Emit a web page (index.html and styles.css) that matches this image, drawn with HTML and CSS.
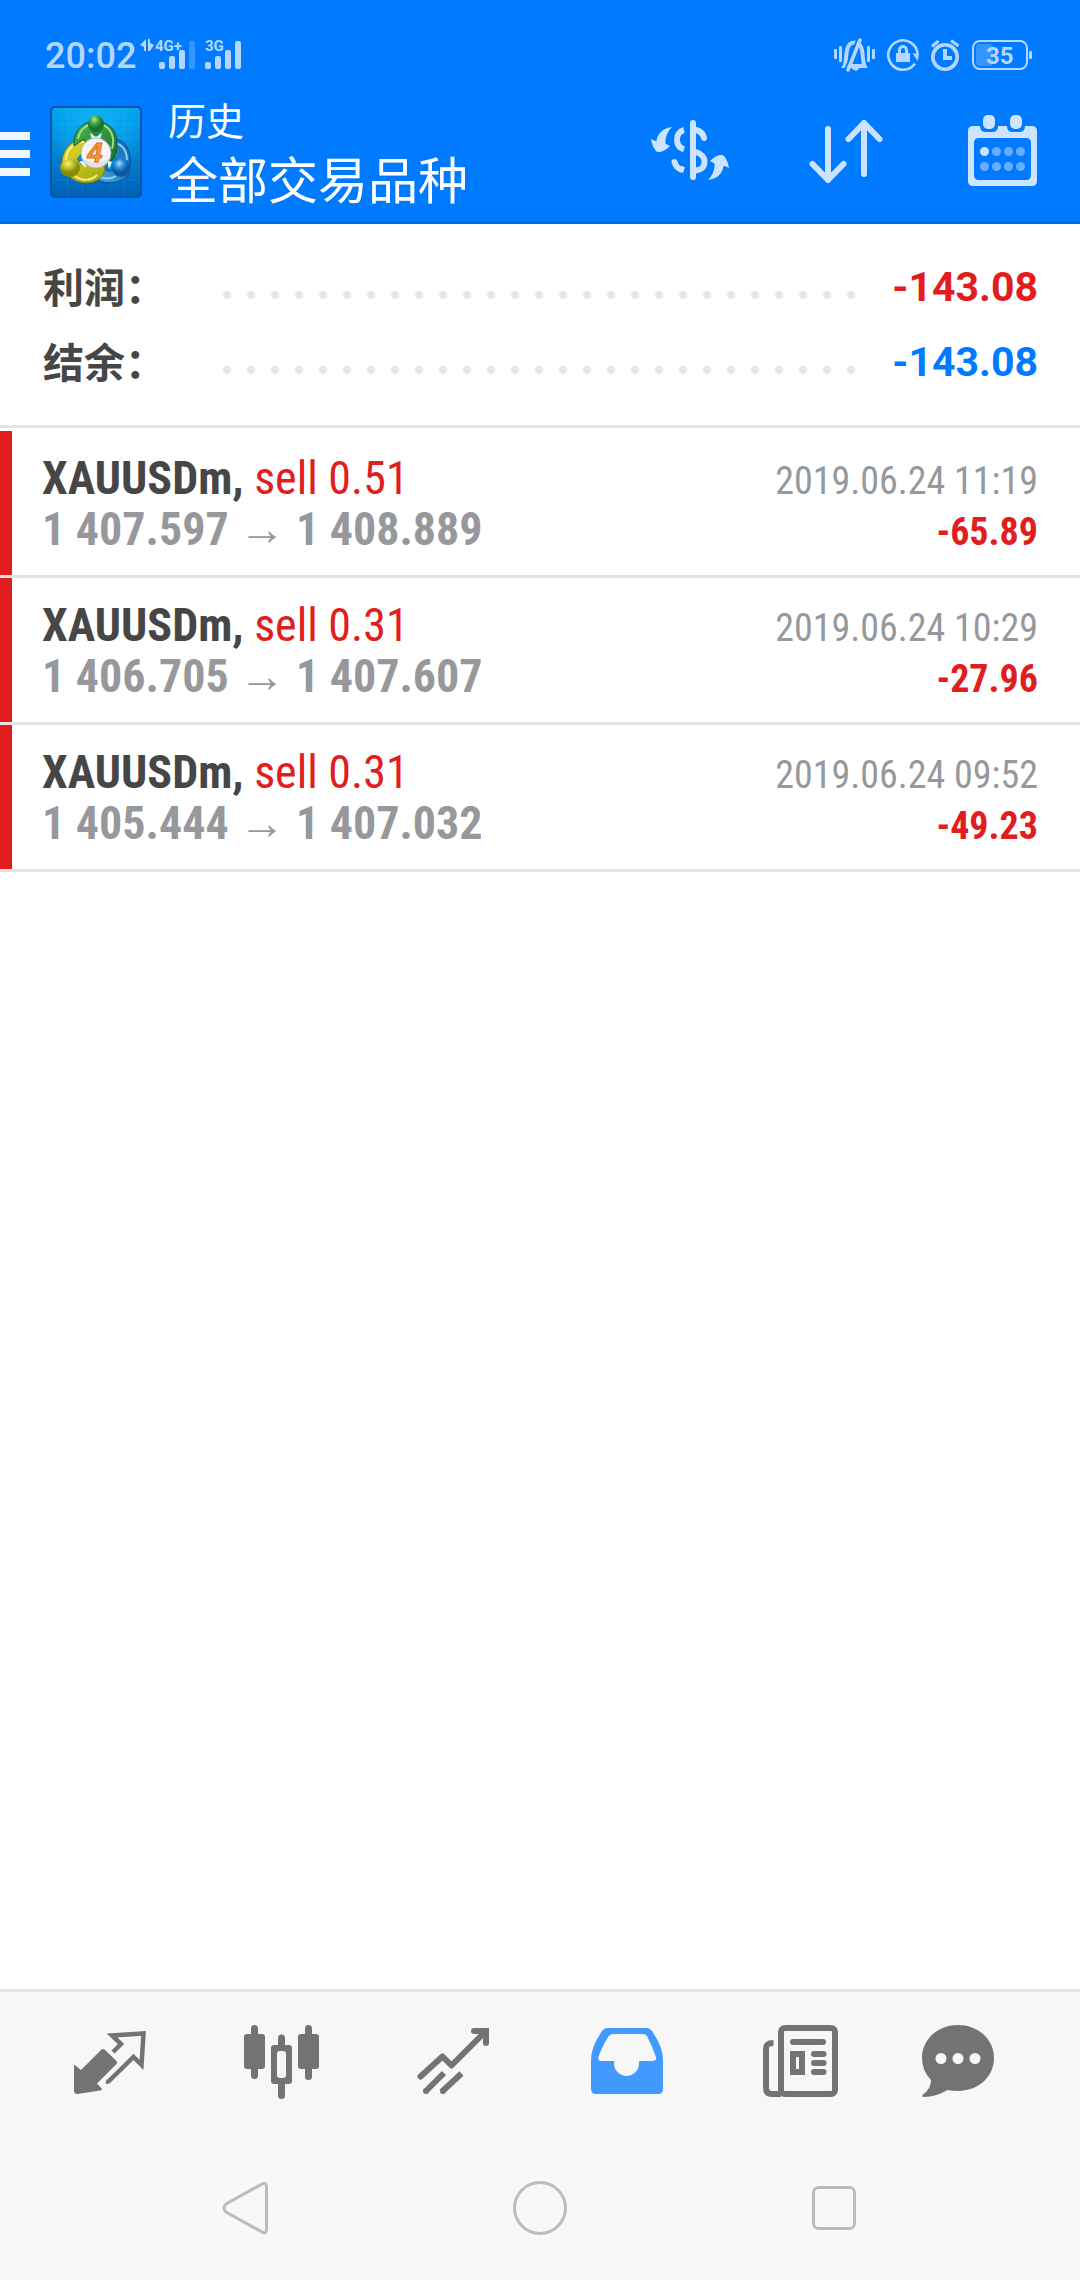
FILE: index.html
```html
<!DOCTYPE html>
<html lang="zh-CN">
<head>
<meta charset="utf-8">
<meta name="viewport" content="width=device-width, initial-scale=1">
<title>历史</title>
<link rel="stylesheet" href="styles.css">
</head>
<body>
<div class="app">
  <header class="top">
    <div class="status">
      <time class="clock">20:02</time>
      <svg class="signals" width="102" height="44" viewBox="0 -6 102 44" role="img" aria-label="信号">
        <g fill="currentColor">
          <path d="M0 6l6-6v12h-2V8zM8 0h2v4l4 2-4 6H8z"/>
          <text x="15" y="12" class="net">4G+</text>
          <rect x="19" y="23" width="6" height="7" rx="2"/>
          <rect x="29" y="17" width="6" height="13" rx="2"/>
          <rect x="39" y="11" width="6" height="19" rx="2"/>
          <rect x="49" y="2" width="6" height="28" rx="2" opacity=".3"/>
          <text x="65" y="12" class="net">3G</text>
          <rect x="65" y="23" width="6" height="7" rx="2"/>
          <rect x="75" y="17" width="6" height="13" rx="2"/>
          <rect x="85" y="11" width="6" height="19" rx="2"/>
          <rect x="95" y="2" width="6" height="28" rx="2"/>
        </g>
      </svg>
      <div class="status-icons">
        <svg width="41" height="34" viewBox="0 0 41 34" role="img" aria-label="静音振动">
          <g fill="currentColor">
            <rect x="0" y="11" width="3" height="10" rx="1"/><rect x="5" y="8" width="3" height="16" rx="1"/>
            <rect x="33" y="8" width="3" height="16" rx="1"/><rect x="38" y="11" width="3" height="10" rx="1"/>
            <path d="M18 29h7v2l-3 2-4-2z"/>
          </g>
          <path d="M10.500 28C13.500 22 10 4.500 20.500 4.500S27.500 22 30.500 28z" fill="none" stroke="currentColor" stroke-width="4"/>
          <path d="M23.500 1L11 32" stroke="#007aff" stroke-width="2"/>
          <path d="M26 2L14 32" stroke="currentColor" stroke-width="3.500" stroke-linecap="round"/>
        </svg>
        <svg width="32" height="32" viewBox="0 0 32 32" role="img" aria-label="方向锁定">
          <path d="M30.600 15A14.700 14.700 0 1 0 28 24.500" fill="none" stroke="currentColor" stroke-width="2.600"/>
          <path d="M25.500 14.500H32L30.800 22z" fill="currentColor"/>
          <rect x="9" y="14" width="14" height="9" fill="currentColor"/>
          <path d="M12.500 14.500V11a3.500 3.500 0 0 1 7 0v3.500" fill="none" stroke="currentColor" stroke-width="3"/>
        </svg>
        <svg width="29" height="33" viewBox="0 0 29 33" role="img" aria-label="闹钟">
          <circle cx="14" cy="18" r="12.200" fill="none" stroke="currentColor" stroke-width="3.600"/>
          <path d="M14 10v9h7" fill="none" stroke="currentColor" stroke-width="4"/>
          <path d="M1 7.500l6.500-5.500M20 1.500l7.500 5.500" stroke="currentColor" stroke-width="3"/>
        </svg>
        <svg width="60" height="30" viewBox="0 0 60 30" role="img" aria-label="电量 35">
          <rect x="1" y="1" width="54" height="28" rx="7" fill="none" stroke="currentColor" stroke-width="2"/>
          <rect x="4" y="4" width="17" height="22" rx="4" fill="currentColor" opacity=".3"/>
          <rect x="57" y="11" width="3" height="8" rx="1" fill="currentColor"/>
          <text x="14" y="24" class="charge" fill="currentColor">35</text>
        </svg>
      </div>
    </div>
    <div class="bar">
      <button class="menu" type="button" aria-label="菜单"><span></span><span></span><span></span></button>
      <svg class="logo" width="92" height="92" viewBox="0 0 92 92" role="img" aria-label="MetaTrader 4">
        <defs>
          <linearGradient id="sky" x1="0" y1="0" x2="0" y2="1"><stop offset="0" stop-color="#00a0ec"/><stop offset=".5" stop-color="#0284d4"/><stop offset="1" stop-color="#0060b4"/></linearGradient>
          <radialGradient id="glow" cx=".5" cy=".15" r=".6"><stop offset="0" stop-color="#10b8ff" stop-opacity=".8"/><stop offset="1" stop-color="#10b8ff" stop-opacity="0"/></radialGradient>
          <linearGradient id="green" x1="0" y1="0" x2="1" y2="1"><stop offset="0" stop-color="#56b64c"/><stop offset="1" stop-color="#0f7029"/></linearGradient>
          <linearGradient id="yellow" x1="0" y1="0" x2="1" y2="1"><stop offset="0" stop-color="#ecd82c"/><stop offset="1" stop-color="#98a80c"/></linearGradient>
          <linearGradient id="blue" x1="0" y1="1" x2="1" y2="0"><stop offset="0" stop-color="#48a8e4"/><stop offset="1" stop-color="#1268b4"/></linearGradient>
          <radialGradient id="greenball" cx=".4" cy=".25"><stop offset="0" stop-color="#a8e0a0"/><stop offset=".5" stop-color="#46a648"/><stop offset="1" stop-color="#167434"/></radialGradient>
          <radialGradient id="yellowball" cx=".4" cy=".25"><stop offset="0" stop-color="#f4f080"/><stop offset=".5" stop-color="#ccc42c"/><stop offset="1" stop-color="#848c08"/></radialGradient>
          <radialGradient id="blueball" cx=".4" cy=".25"><stop offset="0" stop-color="#9cdcfc"/><stop offset=".5" stop-color="#2c90d8"/><stop offset="1" stop-color="#0858a4"/></radialGradient>
        </defs>
        <rect x="1" y="1" width="90" height="90" rx="4" fill="url(#sky)"/>
        <rect x="1" y="1" width="90" height="90" rx="4" fill="url(#glow)" stroke="#0455a4" stroke-width="2"/>
        <path d="M18 2v88M32 2v88M60 2v88M74 2v88M2 18h88M2 32h88M2 60h88M2 74h88" stroke="#fff" stroke-opacity=".07"/>
        <path d="M62 33C73 32 80 41 80 54V62L78 69C71 77 57 79 48 74C41 70 37 64 37 59L48 58L58 65C65 65 68 61 66 53L59 44Z" fill="url(#blue)" stroke="#0d4f98"/>
        <path d="M63 37C72 37 77 45 77 54M42 62C46 72 58 75 66 70" fill="none" stroke="#8cd0f4" stroke-width="2"/>
        <path d="M37 33C22 32 12 44 12 57V64L20 71C28 78 41 79 49 73C54 69 56 64 54 59L40 58L30 58L27 53L36 42Z" fill="url(#yellow)" stroke="#777b10"/>
        <path d="M34 36C23 36 16 45 16 54M25 70C33 76 42 74 47 69" fill="none" stroke="#f9ee88" stroke-width="2"/>
        <path d="M24 40C23 25 32 16 45 15C59 16 67 24 67 37C67 47 64 54 57 58L56 38L46 28L36 37L34 33Z" fill="url(#green)" stroke="#075b28"/>
        <path d="M28 33C29 25 35 20 39 19M53 19C62 23 65 33 62 43" fill="none" stroke="#9ed991" stroke-width="2"/>
        <path d="M40 27l6 4 6-4-2 7h-8zM29 56l6-2 1 8zM57 54l5 2-3 7z" fill="#edf7f7"/>
        <ellipse cx="46" cy="18" rx="8" ry="9" fill="url(#greenball)"/>
        <ellipse cx="20" cy="62" rx="10" ry="9" fill="url(#yellowball)"/>
        <ellipse cx="71" cy="62" rx="9" ry="9" fill="url(#blueball)"/>
        <circle cx="46" cy="47" r="15" fill="#f5f5f7" stroke="#a9bcbc"/>
        <path d="M32 52q14 8 28 0a15 15 0 0 1-28 0z" fill="#d4d5da" opacity=".6"/>
        <text x="45" y="56" class="four">4</text>
      </svg>
      <h1 class="titles"><span class="section">历史</span><span class="filter">全部交易品种</span></h1>
      <div class="actions">
        <button type="button" aria-label="货币">
          <svg width="96" height="96" viewBox="0 0 96 96" fill="none" stroke="currentColor" stroke-width="6" stroke-linecap="round">
            <path d="M51 19v54M62 34C61 29 58 27 54 26M54 48C60 50 62.500 53 62.500 57.500C62.500 63 59 66 54 66.500M32.500 58C34 63 37 65 39 65.500"/>
            <path d="M42 26C37.500 27 35 31 35 35.500S37.500 44 42 45.500M38 64.500L42 66" stroke-linecap="butt"/>
            <g fill="currentColor" stroke="none">
              <path d="M30 23C20 24 15 31 14.500 37Q12 37 9 35Q10 42 14 47Q15.500 48.500 18 48Q23 47 28 42Q26 41 23.500 39.500C23 33 26 27 30 23Z"/>
              <path d="M30 23C20 24 15 31 14.500 37Q12 37 9 35Q10 42 14 47Q15.500 48.500 18 48Q23 47 28 42Q26 41 23.500 39.500C23 33 26 27 30 23Z" transform="rotate(180 48 49.500)"/>
            </g>
          </svg>
        </button>
        <button type="button" aria-label="排序">
          <svg width="96" height="96" viewBox="0 0 96 96" fill="none" stroke="currentColor" stroke-width="6" stroke-linecap="round" stroke-linejoin="round">
            <path d="M30 25v51M14.500 60L30 76L45.500 60M66 70V19M50.500 35L66 19L81.500 35"/>
          </svg>
        </button>
        <button type="button" aria-label="日期">
          <svg width="96" height="96" viewBox="0 0 96 96" fill="currentColor">
            <path fill-rule="evenodd" d="M19 22H26Q26 28 32 28H38Q44 28 44 22H53Q53 28 59 28H65Q71 28 71 22H78Q83 22 83 27V77Q83 82 78 82H19Q14 82 14 77V27Q14 22 19 22ZM25 34Q20 34 20 39V71Q20 76 25 76H72Q77 76 77 71V39Q77 34 72 34Z"/>
            <rect x="29" y="11" width="12" height="14" rx="5"/><rect x="56" y="11" width="12" height="14" rx="5"/>
            <circle cx="30.500" cy="47.500" r="4.500"/>
            <g opacity=".5"><circle cx="42.500" cy="47.500" r="4.500"/><circle cx="54.500" cy="47.500" r="4.500"/><circle cx="66.500" cy="47.500" r="4.500"/><circle cx="30.500" cy="62.500" r="4.500"/><circle cx="42.500" cy="62.500" r="4.500"/><circle cx="54.500" cy="62.500" r="4.500"/><circle cx="66.500" cy="62.500" r="4.500"/></g>
          </svg>
        </button>
      </div>
    </div>
  </header>

  <main class="content">
    <dl class="summary">
      <div class="total"><dt>利润：</dt><dd class="loss">-143.08</dd></div>
      <div class="total"><dt>结余：</dt><dd class="balance">-143.08</dd></div>
    </dl>
    <ul class="deals">
      <li class="deal">
        <div class="line"><span class="symbol">XAUUSDm, <span class="side">sell 0.51</span></span><time class="when">2019.06.24 11:19</time></div>
        <div class="line"><span class="prices">1 407.597 <span class="arrow">→</span> 1 408.889</span><span class="result">-65.89</span></div>
      </li>
      <li class="deal">
        <div class="line"><span class="symbol">XAUUSDm, <span class="side">sell 0.31</span></span><time class="when">2019.06.24 10:29</time></div>
        <div class="line"><span class="prices">1 406.705 <span class="arrow">→</span> 1 407.607</span><span class="result">-27.96</span></div>
      </li>
      <li class="deal">
        <div class="line"><span class="symbol">XAUUSDm, <span class="side">sell 0.31</span></span><time class="when">2019.06.24 09:52</time></div>
        <div class="line"><span class="prices">1 405.444 <span class="arrow">→</span> 1 407.032</span><span class="result">-49.23</span></div>
      </li>
    </ul>
  </main>

  <nav class="tabs">
    <a href="#quotes" aria-label="行情">
      <svg width="96" height="96" viewBox="0 0 96 96">
        <path d="M12 48.500L19 54L39 34Q41 32 43 34L54 44.500Q56 46.500 54 48.500L35 67.500L40 73Q40 74 38 74.500L15.500 78Q12 78 12 75Z" fill="currentColor"/>
        <path d="M51 36L59 28L50 19.500L81.500 17.500L79.500 49L71.500 41L47 65Q46 66 44 65.500" fill="none" stroke="currentColor" stroke-width="4.500"/>
      </svg>
    </a>
    <a href="#chart" aria-label="图表">
      <svg width="96" height="96" viewBox="0 0 96 96" fill="currentColor">
        <rect x="10" y="18" width="21" height="35" rx="3"/><rect x="17" y="9" width="7" height="54" rx="3.500"/>
        <rect x="64" y="18" width="21" height="35" rx="3"/><rect x="71" y="9" width="7" height="55" rx="3.500"/>
        <path d="M44 29V22a3.500 3.500 0 0 1 7 0V29H55Q58 29 58 32V65Q58 68 55 68H51V79.500a3.500 3.500 0 0 1-7 0V68H40Q37 68 37 65V32Q37 29 40 29ZM46 35Q43 35 43 38V59Q43 62 46 62H49Q52 62 52 59V38Q52 35 49 35Z" fill-rule="evenodd"/>
      </svg>
    </a>
    <a href="#trade" aria-label="交易">
      <svg width="96" height="96" viewBox="0 0 96 96" fill="none" stroke="currentColor" stroke-width="6">
        <path d="M14.500 60.500L36.500 40.500L45.500 49.500L80 15M68 15H80V27" stroke-linecap="round" stroke-linejoin="round"/>
        <path d="M78 12h5v5z" fill="currentColor" stroke="none"/>
        <path d="M19 76L38 57M35.500 76L55.500 57.500"/>
        <g fill="currentColor" stroke="none"><circle cx="20" cy="75" r="3"/><circle cx="37" cy="75" r="3"/></g>
      </svg>
    </a>
    <a href="#history" class="active" aria-current="page" aria-label="历史">
      <svg width="96" height="96" viewBox="0 0 96 96" fill="currentColor">
        <path fill-rule="evenodd" d="M29 12H69Q72 12 74 15Q85 31 85 44V73Q85 78 80 78H18Q13 78 13 73V44Q13 31 24 15Q26 12 29 12ZM35 18Q32 18 30 21Q23 33 20.500 41Q20 45 23 45H36V47.500A12.500 12.500 0 0 0 61 47.500V45H74Q79 45 78 41Q74 30 69.500 21Q68 18 65 18Z"/>
      </svg>
    </a>
    <a href="#news" aria-label="新闻">
      <svg width="96" height="96" viewBox="0 0 96 96" fill="none" stroke="currentColor" stroke-width="6">
        <rect x="31" y="12" width="54" height="66" rx="4"/>
        <path d="M23.500 27C18 27 16 28.500 16 33V72Q16 78 22 78H31"/>
        <path d="M43 26H73M64 38H73.500M64 47H73.500M64 56H73.500" stroke-linecap="round"/>
        <rect x="43" y="38" width="9" height="18"/>
      </svg>
    </a>
    <a href="#chat" aria-label="消息">
      <svg width="96" height="96" viewBox="0 0 96 96">
        <path d="M36 9C56 9 72 23 72 42S56 75 36 75Q30 75 25.500 74Q14 81 2 81Q-1 81 1 78.500Q9 73 9 64Q0 55 0 42C0 23 16 9 36 9Z" fill="currentColor"/>
        <g fill="#f7f7f7"><circle cx="19" cy="42.500" r="5.500"/><circle cx="36" cy="42.500" r="5.500"/><circle cx="53" cy="42.500" r="5.500"/></g>
      </svg>
    </a>
  </nav>

  <div class="system">
    <button type="button" aria-label="返回"><svg width="60" height="60" viewBox="0 0 60 60"><path d="M50.500 9V51Q50.500 57 46 54L10 34Q6 30 10 26L46 6Q50.500 4 50.500 9Z"/></svg></button>
    <button type="button" aria-label="主页"><svg width="60" height="60" viewBox="0 0 60 60"><circle cx="30" cy="30" r="25.500"/></svg></button>
    <button type="button" aria-label="最近任务"><svg width="60" height="60" viewBox="0 0 60 60"><rect x="9.500" y="9.500" width="41" height="41" rx="5"/></svg></button>
  </div>
</div>
</body>
</html>
```
FILE: styles.css
```css
* {
  box-sizing: border-box;
}

body {
  margin: 0;
  background: #fff;
  font-family: Roboto, "Noto Sans CJK SC", sans-serif;
}

svg {
  display: block;
  flex: none;
}

button {
  margin: 0;
  padding: 0;
  border: 0;
  background: none;
  color: inherit;
}

.app {
  display: flex;
  flex-direction: column;
  min-height: 100vh;
}

/* Header */
.top {
  background: #007aff;
  border-bottom: 3px solid #006ce1;
  color: #fff;
}

.status {
  display: flex;
  align-items: center;
  gap: 4px;
  height: 83px;
  padding: 27px 48px 0 45px;
  color: #b3d7ff;
}

.clock {
  padding-top: 2px;
  font-size: 36px;
  font-weight: 500;
  line-height: 42px;
}

.net {
  font-size: 15px;
  font-weight: 700;
}

.charge {
  font-size: 24px;
  font-weight: 700;
}

.status-icons {
  display: flex;
  align-items: center;
  gap: 12px;
  margin-left: auto;
}

.bar {
  display: flex;
  align-items: center;
  height: 138px;
  padding-right: 30px;
}

.menu {
  display: flex;
  flex-direction: column;
  gap: 10px;
  width: 30px;
  margin-right: 20px;
  padding-top: 4px;
}

.menu span {
  height: 8px;
  background: #f0f7ff;
}

.four {
  fill: #f79a3c;
  stroke: #e0691c;
  stroke-width: 1px;
  font: italic 700 27px "Liberation Sans", sans-serif;
  text-anchor: middle;
}

.titles {
  display: flex;
  flex-direction: column;
  margin: 0 0 0 26px;
  font-weight: 400;
  line-height: 60px;
}

.section {
  font-size: 38px;
}

.filter {
  font-size: 50px;
}

.actions {
  display: flex;
  gap: 60px;
  margin-left: auto;
  color: #cce4ff;
}

/* Totals */
.content {
  flex: 1;
}

.summary {
  margin: 0;
  padding: 25px 42px 26px 43px;
  border-bottom: 3px solid #e4e4e4;
}

.total {
  display: flex;
  align-items: center;
  height: 75px;
  font-size: 41px;
}

.total dt {
  width: 172px;
  padding-bottom: 4px;
  color: #464646;
  font-weight: 700;
}

.total dd {
  display: flex;
  flex: 1;
  align-items: center;
  margin: 0;
  font-weight: 700;
}

/* Dotted leader between a label and its amount */
.total dd::before {
  content: "";
  flex: 1;
  height: 24px;
  margin: 16px 27px 0 0;
  background: radial-gradient(circle, #e4e4e4 3px, transparent 5px) 0 0 / 24px 24px repeat-x;
}

.loss {
  color: #e21d1d;
}

.balance {
  color: #007aff;
}

/* Closed deals */
.deals {
  margin: 0;
  padding: 3px 0 0;
  list-style: none;
  font-family: "Roboto Condensed", "Liberation Sans Narrow", Roboto, sans-serif;
}

.deal {
  height: 147px;
  padding: 22px 42px 0 42px;
  border-bottom: 3px solid #e4e4e4;
  background: linear-gradient(#e21d1d, #e21d1d) 0 0 / 12px 100% no-repeat;
}

.line {
  display: flex;
  align-items: baseline;
  justify-content: space-between;
  height: 51px;
  font-size: 46px;
  line-height: 51px;
  white-space: nowrap;
}

.symbol {
  color: #464646;
  font-weight: 700;
}

.side {
  color: #e21d1d;
  font-weight: 400;
}

.prices {
  color: #97989c;
  font-weight: 700;
}

.arrow {
  font-family: "Liberation Sans", sans-serif;
  line-height: 1;
}

.when {
  color: #97989c;
  font-size: 38px;
}

.result {
  color: #e21d1d;
  font-size: 38px;
  font-weight: 700;
}

/* Bottom tabs */
.tabs {
  display: grid;
  grid-template-columns: repeat(6, 1fr);
  place-items: center;
  height: 147px;
  padding: 0 24px;
  border-top: 3px solid #e4e4e4;
  background: #f7f7f7;
}

.tabs a {
  color: #737373;
}

.tabs .active {
  color: #419bff;
}

/* System navigation */
.system {
  display: grid;
  grid-template-columns: repeat(3, 1fr);
  place-items: center;
  height: 144px;
  padding: 0 99px;
  background: #f8f8f8;
}

.system svg {
  fill: none;
  stroke: #bcbcbc;
  stroke-width: 3px;
}
```
